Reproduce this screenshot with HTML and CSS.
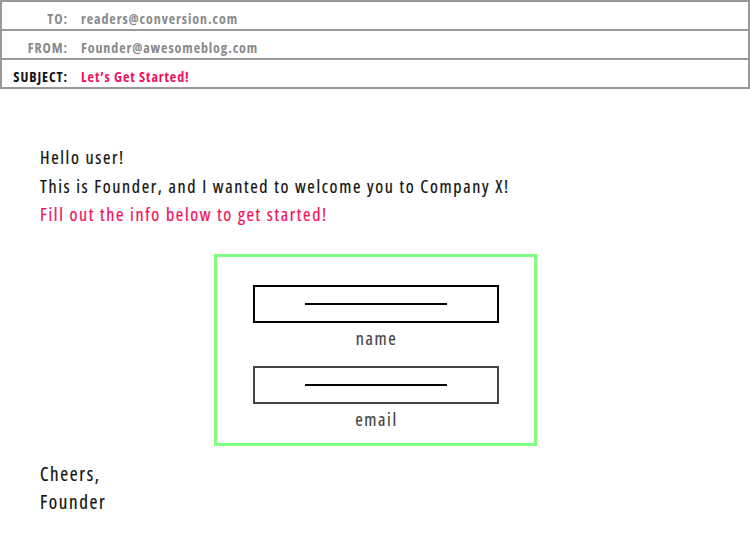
FILE: index.html
```
<!DOCTYPE html>
<html>
<head>
<meta charset="utf-8">
<link rel="stylesheet" href="styles.css">
</head>
<body>
<div class="header">
  <div class="row">
    <span class="label">TO:</span>
    <span class="value">readers@conversion.com</span>
  </div>
  <div class="row">
    <span class="label">FROM:</span>
    <span class="value">Founder@awesomeblog.com</span>
  </div>
  <div class="row subject">
    <span class="label">SUBJECT:</span>
    <span class="value">Let’s Get Started!</span>
  </div>
</div>
<div class="content">
  <p class="line">Hello user!</p>
  <p class="line">This is Founder, and I wanted to welcome you to Company X!</p>
  <p class="line accent">Fill out the info below to get started!</p>
  <div class="form">
    <div class="field">
      <div class="input"><span class="dash"></span></div>
      <div class="caption">name</div>
    </div>
    <div class="field">
      <div class="input dim"><span class="dash"></span></div>
      <div class="caption">email</div>
    </div>
  </div>
  <p class="sign">Cheers,</p>
  <p class="sign">Founder</p>
</div>
</body>
</html>
```
FILE: styles.css
```
html, body {
  margin: 0;
  padding: 0;
  background: #fff;
}
body {
  font-family: "Open Sans", "DejaVu Sans", sans-serif;
  font-stretch: 75%;
  font-weight: 400;
  color: #111;
}
.header {
  width: 750px;
  box-sizing: border-box;
  border: 2px solid #999;
}
.row {
  display: grid;
  grid-template-columns: 66px 1fr;
  column-gap: 13px;
  box-sizing: border-box;
  height: 29px;
  padding-top: 6px;
  align-items: center;
  border-bottom: 2px solid #999;
  font-size: 14px;
  font-weight: 700;
  letter-spacing: 0.9px;
  color: #8a8a8a;
}
.row:last-child {
  border-bottom: none;
  height: 27px;
}
.label {
  text-align: right;
}
.subject .label {
  color: #111;
}
.subject .value {
  color: #f2105a;
}
.content {
  padding: 54px 0 0 40px;
}
.line, .sign {
  margin: 0;
  font-size: 18px;
  line-height: 28.5px;
  letter-spacing: 1.65px;
  -webkit-text-stroke: 0.2px currentColor;
}
.accent {
  color: #f2105a;
}
.form {
  box-sizing: border-box;
  width: 323px;
  margin: 25px 0 0 174px;
  border: 3px solid #80ff80;
  padding: 28px 0 9px;
  display: flex;
  flex-direction: column;
  align-items: center;
  gap: 13px;
}
.field {
  display: flex;
  flex-direction: column;
  align-items: center;
}
.input {
  box-sizing: border-box;
  width: 246px;
  height: 38px;
  border: 2px solid #000;
  display: flex;
  align-items: center;
  justify-content: center;
  margin-left: 1px;
}
.input.dim {
  border-color: #444;
}
.dash {
  width: 142px;
  height: 2px;
  background: #000;
}
.caption {
  font-size: 18px;
  line-height: 30px;
  letter-spacing: 1.65px;
  color: #444;
  margin-left: 2px;
  -webkit-text-stroke: 0.2px currentColor;
}
.sign {
  font-size: 19px;
}
.form + .sign {
  margin-top: 14px;
}
```
